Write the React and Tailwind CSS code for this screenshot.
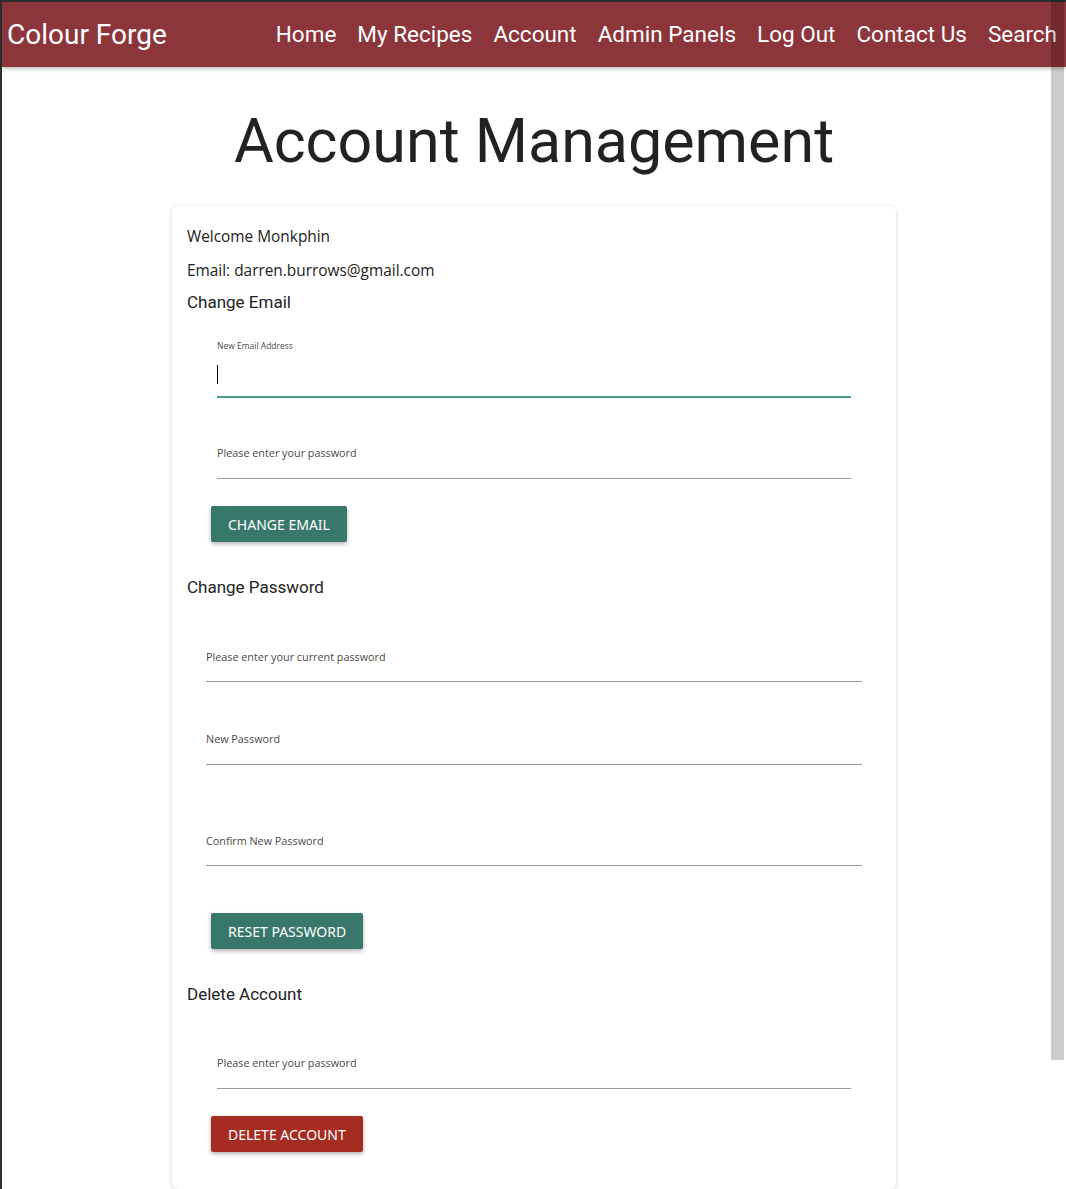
import React from 'react';

const poppins = { fontFamily: '"Open Sans", "Noto Sans", sans-serif' };

function Field({ label, inset, top, focused, labelSize = 'text-[10.8px]', area = 'h-[18px]' }) {
  return (
    <div className={`${inset} ${top}`}>
      <div className={`${labelSize} leading-[14px] text-[#4a4a4a] font-['Open_Sans',sans-serif]`}>{label}</div>
      <div
        className={`${area} flex items-center ${
          focused ? 'border-b-2 border-[#4f9b8a]' : 'border-b border-[#9a9a9a]'
        }`}
      >
        {focused && <span className="block w-px h-[19px] bg-black" />}
      </div>
    </div>
  );
}

function Button({ children, color, top }) {
  return (
    <div className={`ml-[39px] ${top}`}>
      <button
        className={`h-9 px-[17px] rounded-[2px] text-white text-[14px] shadow-[0_2px_4px_rgba(0,0,0,0.3)] font-['Noto_Sans',sans-serif] ${color}`}
      >
        {children}
      </button>
    </div>
  );
}

export default function App() {
  const links = ['Home', 'My Recipes', 'Account', 'Admin Panels', 'Log Out', 'Contact Us', 'Search'];

  return (
    <div className="relative min-h-[1189px] bg-white border-t-2 border-l-2 border-[#2e2e2e] font-['Roboto',sans-serif]">
      <nav className="h-[65px] bg-[#8c353b] flex items-center justify-between pl-[5px] pr-[9px] shadow-[0_2px_4px_rgba(0,0,0,0.25)]">
        <span className="text-white text-[28px] leading-none">Colour Forge</span>
        <div className="flex items-center gap-[21px]">
          {links.map((l) => (
            <a key={l} className="text-white text-[22.5px] leading-none cursor-pointer">
              {l}
            </a>
          ))}
        </div>
      </nav>

      <h1 className="text-center text-[#222] text-[61px] leading-none mt-[44px] font-normal">
        Account Management
      </h1>

      <div className="w-[724px] mx-auto mt-[34px] bg-white rounded-[6px] shadow-[0_1px_4px_rgba(0,0,0,0.18)] pt-[19px] pb-[37px]">
        <div style={poppins} className="pl-[15px] text-[15.4px] leading-6 text-[#222]">
          <p>Welcome Monkphin</p>
          <p className="mt-[10px]">Email: darren.burrows@gmail.com</p>
        </div>
        <h2 className="pl-[15px] mt-[6px] text-[17px] leading-[26px] text-[#222]">Change Email</h2>
        <Field
          label="New Email Address"
          inset="mx-[45px]"
          top="mt-[24px]"
          focused
          labelSize="text-[8.5px]"
          area="h-[45px]"
        />
        <Field label="Please enter your password" inset="mx-[45px]" top="mt-[48px]" area="h-[19px]" />
        <Button color="bg-[#38786b]" top="mt-[27px]">CHANGE EMAIL</Button>

        <h2 className="pl-[15px] mt-[32px] text-[17px] leading-[26px] text-[#222]">Change Password</h2>
        <Field label="Please enter your current password" inset="mx-[34px]" top="mt-[50px]" area="h-[18px]" />
        <Field label="New Password" inset="mx-[34px]" top="mt-[50px]" area="h-[19px]" />
        <Field label="Confirm New Password" inset="mx-[34px]" top="mt-[69px]" area="h-[18px]" />
        <Button color="bg-[#38786b]" top="mt-[47px]">RESET PASSWORD</Button>

        <h2 className="pl-[15px] mt-[32px] text-[17px] leading-[26px] text-[#222]">Delete Account</h2>
        <Field label="Please enter your password" inset="mx-[45px]" top="mt-[49px]" area="h-[19px]" />
        <Button color="bg-[#a62b21]" top="mt-[27px]">DELETE ACCOUNT</Button>
      </div>

      <div className="absolute top-[-2px] right-[2px] w-[13px] h-[1060px] bg-black/20" />
    </div>
  );
}
